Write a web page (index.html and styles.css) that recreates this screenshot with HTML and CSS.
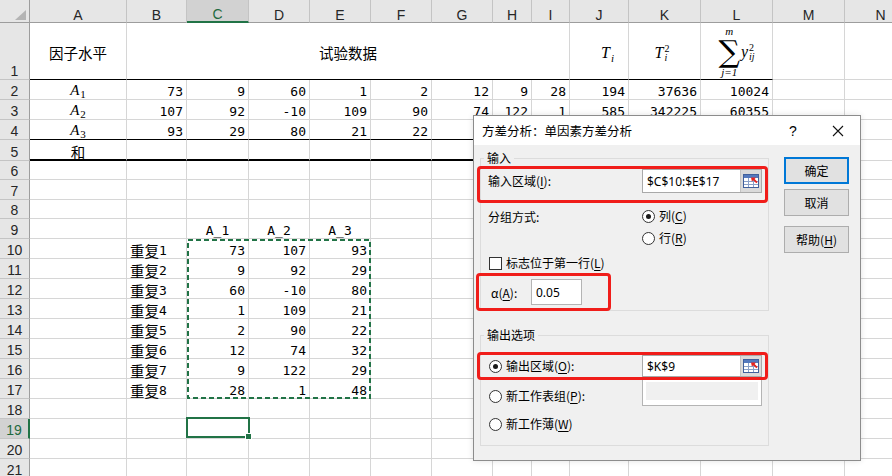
FILE: index.html
```html
<!DOCTYPE html>
<html lang="zh-CN">
<head>
<meta charset="utf-8">
<title>方差分析：单因素方差分析</title>
<link rel="stylesheet" href="styles.css">
</head>
<body>
<div class="stack">
  <div class="sheet">
    <div class="corner"><svg width="29" height="22" viewBox="0 0 29 22"><path d="M26 10 L26 20 L15 20 Z" fill="#b4b4b4"/></svg></div>
    <div class="h">A</div><div class="h">B</div><div class="h hsel">C</div><div class="h">D</div><div class="h">E</div><div class="h">F</div><div class="h">G</div><div class="h">H</div><div class="h">I</div><div class="h">J</div><div class="h">K</div><div class="h">L</div><div class="h">M</div><div class="h">N</div>

    <div class="rh">1</div>
    <div class="c bb mid"><span class="zh">因子水平</span></div>
    <div class="c bb mid merge"><span class="zh">试验数据</span></div>
    <div class="c bb mid eq-j"><span class="eq"><i>T</i><sub>i</sub></span></div>
    <div class="c bb mid eq-k"><span class="eq"><i>T</i><span class="ss"><sup>2</sup><sub>i</sub></span></span></div>
    <div class="c bb mid eq-l"><span class="eq"><span class="sum"><span class="lim">m</span><span class="sig">∑</span><span class="lim">j=1</span></span><i>y</i><span class="ss"><sup>2</sup><sub>ij</sub></span></span></div>
    <div class="c"></div><div class="c"></div>

    <div class="rh">2</div>
    <div class="c ctr"><span class="ma"><i>A</i><sub>1</sub></span></div>
    <div class="c n">73</div><div class="c n">9</div><div class="c n">60</div><div class="c n">1</div><div class="c n">2</div><div class="c n">12</div><div class="c n">9</div><div class="c n">28</div><div class="c n">194</div><div class="c n">37636</div><div class="c n">10024</div>
    <div class="c"></div><div class="c"></div>

    <div class="rh">3</div>
    <div class="c ctr"><span class="ma"><i>A</i><sub>2</sub></span></div>
    <div class="c n">107</div><div class="c n">92</div><div class="c n">-10</div><div class="c n">109</div><div class="c n">90</div><div class="c n">74</div><div class="c n">122</div><div class="c n">1</div><div class="c n">585</div><div class="c n">342225</div><div class="c n">60355</div>
    <div class="c"></div><div class="c"></div>

    <div class="rh">4</div>
    <div class="c ctr bb"><span class="ma"><i>A</i><sub>3</sub></span></div>
    <div class="c n bb">93</div><div class="c n bb">29</div><div class="c n bb">80</div><div class="c n bb">21</div><div class="c n bb">22</div><div class="c n bb"></div><div class="c n bb"></div><div class="c n bb"></div><div class="c n bb"></div><div class="c n bb"></div><div class="c n bb"></div>
    <div class="c"></div><div class="c"></div>

    <div class="rh">5</div>
    <div class="c ctr bb2"><span class="zh">和</span></div>
    <div class="c bb2"></div><div class="c bb2"></div><div class="c bb2"></div><div class="c bb2"></div><div class="c bb2"></div><div class="c bb2"></div><div class="c bb2"></div><div class="c bb2"></div><div class="c bb2"></div><div class="c bb2"></div><div class="c bb2"></div>
    <div class="c"></div><div class="c"></div>

    <div class="rh">6</div>
    <div class="c"></div><div class="c"></div><div class="c"></div><div class="c"></div><div class="c"></div><div class="c"></div><div class="c"></div><div class="c"></div><div class="c"></div><div class="c"></div><div class="c"></div><div class="c"></div><div class="c"></div><div class="c"></div>

    <div class="rh">7</div>
    <div class="c"></div><div class="c"></div><div class="c"></div><div class="c"></div><div class="c"></div><div class="c"></div><div class="c"></div><div class="c"></div><div class="c"></div><div class="c"></div><div class="c"></div><div class="c"></div><div class="c"></div><div class="c"></div>

    <div class="rh">8</div>
    <div class="c"></div><div class="c"></div><div class="c"></div><div class="c"></div><div class="c"></div><div class="c"></div><div class="c"></div><div class="c"></div><div class="c"></div><div class="c"></div><div class="c"></div><div class="c"></div><div class="c"></div><div class="c"></div>

    <div class="rh">9</div>
    <div class="c"></div><div class="c"></div>
    <div class="c ctr">A_1</div><div class="c ctr">A_2</div><div class="c ctr">A_3</div>
    <div class="c"></div><div class="c"></div><div class="c"></div><div class="c"></div><div class="c"></div><div class="c"></div><div class="c"></div><div class="c"></div><div class="c"></div>

    <div class="rh">10</div>
    <div class="c"></div><div class="c"><span class="zh">重复</span>1</div>
    <div class="c n">73</div><div class="c n">107</div><div class="c n">93</div>
    <div class="c"></div><div class="c"></div><div class="c"></div><div class="c"></div><div class="c"></div><div class="c"></div><div class="c"></div><div class="c"></div><div class="c"></div>

    <div class="rh">11</div>
    <div class="c"></div><div class="c"><span class="zh">重复</span>2</div>
    <div class="c n">9</div><div class="c n">92</div><div class="c n">29</div>
    <div class="c"></div><div class="c"></div><div class="c"></div><div class="c"></div><div class="c"></div><div class="c"></div><div class="c"></div><div class="c"></div><div class="c"></div>

    <div class="rh">12</div>
    <div class="c"></div><div class="c"><span class="zh">重复</span>3</div>
    <div class="c n">60</div><div class="c n">-10</div><div class="c n">80</div>
    <div class="c"></div><div class="c"></div><div class="c"></div><div class="c"></div><div class="c"></div><div class="c"></div><div class="c"></div><div class="c"></div><div class="c"></div>

    <div class="rh">13</div>
    <div class="c"></div><div class="c"><span class="zh">重复</span>4</div>
    <div class="c n">1</div><div class="c n">109</div><div class="c n">21</div>
    <div class="c"></div><div class="c"></div><div class="c"></div><div class="c"></div><div class="c"></div><div class="c"></div><div class="c"></div><div class="c"></div><div class="c"></div>

    <div class="rh">14</div>
    <div class="c"></div><div class="c"><span class="zh">重复</span>5</div>
    <div class="c n">2</div><div class="c n">90</div><div class="c n">22</div>
    <div class="c"></div><div class="c"></div><div class="c"></div><div class="c"></div><div class="c"></div><div class="c"></div><div class="c"></div><div class="c"></div><div class="c"></div>

    <div class="rh">15</div>
    <div class="c"></div><div class="c"><span class="zh">重复</span>6</div>
    <div class="c n">12</div><div class="c n">74</div><div class="c n">32</div>
    <div class="c"></div><div class="c"></div><div class="c"></div><div class="c"></div><div class="c"></div><div class="c"></div><div class="c"></div><div class="c"></div><div class="c"></div>

    <div class="rh">16</div>
    <div class="c"></div><div class="c"><span class="zh">重复</span>7</div>
    <div class="c n">9</div><div class="c n">122</div><div class="c n">29</div>
    <div class="c"></div><div class="c"></div><div class="c"></div><div class="c"></div><div class="c"></div><div class="c"></div><div class="c"></div><div class="c"></div><div class="c"></div>

    <div class="rh">17</div>
    <div class="c"></div><div class="c"><span class="zh">重复</span>8</div>
    <div class="c n">28</div><div class="c n">1</div><div class="c n">48</div>
    <div class="c"></div><div class="c"></div><div class="c"></div><div class="c"></div><div class="c"></div><div class="c"></div><div class="c"></div><div class="c"></div><div class="c"></div>

    <div class="rh">18</div>
    <div class="c"></div><div class="c"></div><div class="c"></div><div class="c"></div><div class="c"></div><div class="c"></div><div class="c"></div><div class="c"></div><div class="c"></div><div class="c"></div><div class="c"></div><div class="c"></div><div class="c"></div><div class="c"></div>

    <div class="rh rhsel">19</div>
    <div class="c"></div><div class="c"></div><div class="c"></div><div class="c"></div><div class="c"></div><div class="c"></div><div class="c"></div><div class="c"></div><div class="c"></div><div class="c"></div><div class="c"></div><div class="c"></div><div class="c"></div><div class="c"></div>

    <div class="rh">20</div>
    <div class="c"></div><div class="c"></div><div class="c"></div><div class="c"></div><div class="c"></div><div class="c"></div><div class="c"></div><div class="c"></div><div class="c"></div><div class="c"></div><div class="c"></div><div class="c"></div><div class="c"></div><div class="c"></div>

    <div class="rh">21</div>
    <div class="c"></div><div class="c"></div><div class="c"></div><div class="c"></div><div class="c"></div><div class="c"></div><div class="c"></div><div class="c"></div><div class="c"></div><div class="c"></div><div class="c"></div><div class="c"></div><div class="c"></div><div class="c"></div>
  </div>

  <div class="overlay">
    <div class="marquee"><svg width="184" height="160" viewBox="0 0 184 160"><rect x="1" y="1" width="182" height="158" fill="none" stroke="#217346" stroke-width="2" stroke-dasharray="5 3"/></svg></div>
    <div class="selbox"><span class="handle"></span></div>
  </div>
</div>

<div class="dlg">
  <div class="dlg-title">
    <span class="dlg-name">方差分析：单因素方差分析</span>
    <span class="dlg-help">?</span>
    <span class="dlg-close"><svg width="12" height="12" viewBox="0 0 12 12"><path d="M1 1L11 11M11 1L1 11" stroke="#111" stroke-width="1.1" fill="none"/></svg></span>
  </div>
  <div class="dlg-body">
    <div class="dlg-main">
      <fieldset class="grp grp-in">
        <legend>输入</legend>
        <div class="mark mark-range">
          <span class="lbl-w">输入区域(<u>I</u>):</span>
          <div class="ref">
            <span class="ref-text">$C$10:$E$17</span>
            <span class="ref-btn"><svg width="16" height="14" viewBox="0 0 16 14"><rect x="0.5" y="0.5" width="15" height="13" fill="#fff" stroke="#41609c"/><rect x="1" y="1" width="14" height="3" fill="#5479bd"/><path d="M1 7.5H15M1 10.5H15M5.5 4V13M10.5 4V13" stroke="#8aa0c8" stroke-width="1"/><path d="M8 3.5L13 3.5L11.6 4.9L14.6 7.9L13.3 9.2L10.3 6.2L8.9 7.6Z" fill="#e8231d"/></svg></span>
          </div>
        </div>
        <div class="line">
          <span class="lbl-w">分组方式:</span>
          <span class="opt"><span class="radio on"></span>列(<u>C</u>)</span>
        </div>
        <div class="line">
          <span class="lbl-w"></span>
          <span class="opt"><span class="radio"></span>行(<u>R</u>)</span>
        </div>
        <div class="line line-chk">
          <span class="opt"><span class="check"></span>标志位于第一行(<u>L</u>)</span>
        </div>
        <div class="mark mark-alpha">
          <span class="lbl-a">α(<u>A</u>):</span>
          <span class="field">0.05</span>
        </div>
      </fieldset>
      <fieldset class="grp grp-out">
        <legend>输出选项</legend>
        <div class="mark mark-out">
          <span class="opt opt-w"><span class="radio on"></span>输出区域(<u>O</u>):</span>
          <div class="ref ref-sm">
            <span class="ref-text">$K$9</span>
            <span class="ref-btn"><svg width="16" height="14" viewBox="0 0 16 14"><rect x="0.5" y="0.5" width="15" height="13" fill="#fff" stroke="#41609c"/><rect x="1" y="1" width="14" height="3" fill="#5479bd"/><path d="M1 7.5H15M1 10.5H15M5.5 4V13M10.5 4V13" stroke="#8aa0c8" stroke-width="1"/><path d="M8 3.5L13 3.5L11.6 4.9L14.6 7.9L13.3 9.2L10.3 6.2L8.9 7.6Z" fill="#e8231d"/></svg></span>
          </div>
        </div>
        <div class="line line-sheet">
          <span class="opt opt-w"><span class="radio"></span>新工作表组(<u>P</u>):</span>
          <span class="ref-off"><span class="ref-off-in"></span></span>
        </div>
        <div class="line line-book">
          <span class="opt"><span class="radio"></span>新工作薄(<u>W</u>)</span>
        </div>
      </fieldset>
    </div>
    <div class="dlg-btns">
      <button class="btn btn-def">确定</button>
      <button class="btn">取消</button>
      <button class="btn btn-help">帮助(<u>H</u>)</button>
    </div>
  </div>
</div>
</body>
</html>
```

FILE: styles.css
```css
* { box-sizing: border-box; }
html, body { margin: 0; padding: 0; }
body {
  width: 892px;
  height: 476px;
  overflow: hidden;
  position: relative;
  background: #fff;
  color: #000;
  font-family: "Noto Sans CJK SC", sans-serif;
  --cols: 30px 97px 60px 62px 61px 61px 61px 61px 39px 38px 59px 72px 72px 72px 72px;
  --rows: 23px 57px 20px 20px 20px 21px 19px 20px 19px repeat(13, 20px);
}

.stack { display: grid; }
.stack > * { grid-area: 1 / 1; }

.sheet, .overlay {
  display: grid;
  grid-template-columns: var(--cols);
  grid-template-rows: var(--rows);
}

/* headers */
.corner {
  background: #e6e6e6;
  border-right: 1px solid #9d9d9d;
  border-bottom: 1px solid #9d9d9d;
}
.corner svg { display: block; }
.h {
  background: #e6e6e6;
  border-right: 1px solid #c4c4c4;
  border-bottom: 1px solid #9d9d9d;
  display: flex;
  justify-content: center;
  align-items: flex-end;
  font-family: "Liberation Sans", sans-serif;
  font-size: 14px;
  line-height: 14px;
  color: #262626;
}
.hsel {
  background: #d2d2d2;
  border-bottom: 2px solid #217346;
  color: #1e6a40;
}
.rh {
  background: #e6e6e6;
  border-right: 1px solid #9d9d9d;
  border-bottom: 1px solid #c4c4c4;
  display: flex;
  justify-content: center;
  align-items: flex-end;
  font-family: "Liberation Sans", sans-serif;
  font-size: 14px;
  line-height: 16px;
  color: #262626;
}
.rhsel {
  background: #d2d2d2;
  border-right: 2px solid #217346;
  color: #1e6a40;
}

/* cells */
.c {
  border-right: 1px solid #d6d6d6;
  border-bottom: 1px solid #d6d6d6;
  display: flex;
  align-items: flex-end;
  padding: 0 3px;
  font-family: "DejaVu Sans Mono", monospace;
  font-size: 13px;
  line-height: 14px;
  white-space: nowrap;
}
.n { justify-content: flex-end; }
.ctr { justify-content: center; }
.mid { align-items: center; justify-content: center; padding-top: 3px; }
.merge { grid-column: span 8; }
.bb { border-bottom-color: #000; }
.bb2 { border-bottom: 2px solid #000; }

.zh {
  font-family: "Noto Sans CJK SC", sans-serif;
  font-size: 14.5px;
  line-height: 14px;
}

/* math */
.ma {
  font-family: "Liberation Serif", serif;
  font-size: 15px;
  line-height: 14px;
  padding-bottom: 2px;
}
.ma i { font-style: italic; }
.ma sub { font-size: 11px; vertical-align: -3px; line-height: 0; margin-left: 1px; }

.eq {
  font-family: "Liberation Serif", serif;
  font-size: 16px;
  line-height: 16px;
  display: inline-flex;
  align-items: center;
}
.eq i { font-style: italic; }
.eq > sub { font-size: 11px; font-style: italic; line-height: 0; vertical-align: 0; margin-top: 10px; margin-left: 1px; }
.ss {
  display: inline-flex;
  flex-direction: column;
  font-size: 10px;
  line-height: 9px;
  margin-left: 1px;
}
.ss sup, .ss sub { vertical-align: 0; font-size: 10px; line-height: 9px; }
.ss sub { font-style: italic; }
.eq-j { padding-left: 20px; }
.eq-k { padding-right: 8px; }
.eq-l { padding-top: 1px; }
.sum {
  display: inline-flex;
  flex-direction: column;
  align-items: center;
  margin-right: 1px;
}
.lim { font-style: italic; font-size: 11px; line-height: 11px; }
.sig {
  font-family: "DejaVu Serif", serif;
  font-size: 30px;
  line-height: 30px;
}

/* overlay */
.overlay { pointer-events: none; }
.marquee {
  grid-column: 4 / 7;
  grid-row: 11 / 19;
}
.marquee svg { display: block; }
.selbox {
  grid-column: 4 / 5;
  grid-row: 20 / 21;
  margin: -2px -1px 1px -1px;
  border: 2px solid #217346;
  position: relative;
}
.handle {
  position: absolute;
  right: -4px;
  bottom: -4px;
  width: 7px;
  height: 7px;
  background: #217346;
  border: 1px solid #fff;
}

/* dialog */
.dlg {
  position: absolute;
  left: 473px;
  top: 115px;
  width: 388px;
  border: 1px solid #8c8c8c;
  background: #f0f0f0;
  font-family: "Noto Sans CJK SC", sans-serif;
  font-size: 12px;
  box-shadow: 0 0 6px rgba(0,0,0,0.12);
}
.dlg-title {
  height: 29px;
  background: #fff;
  display: flex;
  align-items: center;
  padding-left: 8px;
  font-size: 12.5px;
}
.dlg-name { flex: 1; }
.dlg-help { width: 20px; text-align: center; font-size: 14px; margin-right: 20px; font-family: "Liberation Sans", sans-serif; }
.dlg-close { width: 30px; display: flex; justify-content: center; margin-right: 7px; }
.dlg-close svg { display: block; }

.dlg-body {
  display: flex;
  gap: 15px;
  padding: 5px 11px 14px 6px;
}
.dlg-main { width: 289px; }

.grp {
  margin: 0;
  padding: 0;
  border: 1px solid #dcdcdc;
  min-width: 0;
}
.grp legend {
  padding: 0 3px;
  margin-left: 3px;
  font-size: 12px;
  line-height: 16px;
  height: 16px;
}
.grp-out { margin-top: 16px; padding-bottom: 10px; }

.mark {
  border: 3px solid #f01d1a;
  border-radius: 4px;
  display: flex;
  align-items: center;
}
.mark-range {
  margin-left: -4px;
  height: 37px;
  padding: 0 3px 7px 8px;
  align-items: flex-start;
}
.mark-range .lbl-w { line-height: 24px; }
.mark-alpha {
  margin-left: -5px;
  width: 135px;
  height: 38px;
  margin-top: -1px;
  margin-bottom: -1px;
  padding-left: 12px;
}
.mark-out {
  margin-left: -4px;
  margin-top: 9px;
  height: 28px;
  padding-left: 9px;
}

.lbl-w { width: 154px; flex: none; }
.lbl-a { width: 40px; flex: none; }
.line {
  display: flex;
  align-items: center;
  height: 22px;
  padding-left: 7px;
}
.mark-range + .line { margin-top: 2px; }
.line-chk { margin-top: 3px; padding-left: 8px; }
.line-sheet { height: 26px; align-items: flex-start; padding-left: 8px; }
.line-sheet .opt { margin-top: 8px; }
.line-book { margin-top: 7px; padding-left: 8px; }

.opt { display: inline-flex; align-items: center; line-height: 16px; }
.opt-w { width: 153px; flex: none; }
u { text-decoration: underline; text-underline-offset: 2px; }

.radio {
  width: 13px;
  height: 13px;
  border: 1px solid #333;
  border-radius: 50%;
  background: #fff;
  margin-right: 4px;
  display: inline-flex;
  align-items: center;
  justify-content: center;
  flex: none;
}
.radio.on::after {
  content: "";
  width: 5px;
  height: 5px;
  border-radius: 50%;
  background: #1a1a1a;
}
.check {
  width: 13px;
  height: 13px;
  border: 1px solid #333;
  background: #fff;
  margin-right: 4px;
  flex: none;
}

.ref {
  display: flex;
  width: 120px;
  height: 24px;
  border: 1px solid #a9a9a9;
  background: #fff;
  flex: none;
}
.ref-sm { height: 22px; }
.ref-text {
  flex: 1;
  padding-left: 4px;
  display: flex;
  align-items: center;
  font-family: "Noto Sans", sans-serif;
  font-size: 12px;
}
.ref-btn {
  width: 21px;
  background: #dadada;
  border-left: 1px solid #c4c4c4;
  display: flex;
  align-items: center;
  justify-content: center;
}
.ref-btn svg { display: block; }
.field {
  width: 51px;
  height: 26px;
  border: 1px solid #b4b4b4;
  background: #fff;
  display: flex;
  align-items: center;
  padding-left: 4px;
  font-family: "Noto Sans", sans-serif;
  font-size: 12px;
}
.ref-off {
  width: 120px;
  height: 26px;
  border: 1px solid #b4b4b4;
  border-top: none;
  background: #fff;
  padding: 2px 3px 5px 3px;
  display: flex;
}
.ref-off-in { flex: 1; background: #f0f0f0; }

.dlg-btns {
  width: 65px;
  margin-top: 7px;
  display: flex;
  flex-direction: column;
  gap: 5px;
}
.btn {
  width: 65px;
  height: 27px;
  padding: 0;
  background: #e1e1e1;
  border: 1px solid #adadad;
  font-family: "Noto Sans CJK SC", sans-serif;
  font-size: 12px;
  color: #000;
}
.btn-def { border: 2px solid #0078d7; }
.btn-help { margin-top: 5px; }
```
